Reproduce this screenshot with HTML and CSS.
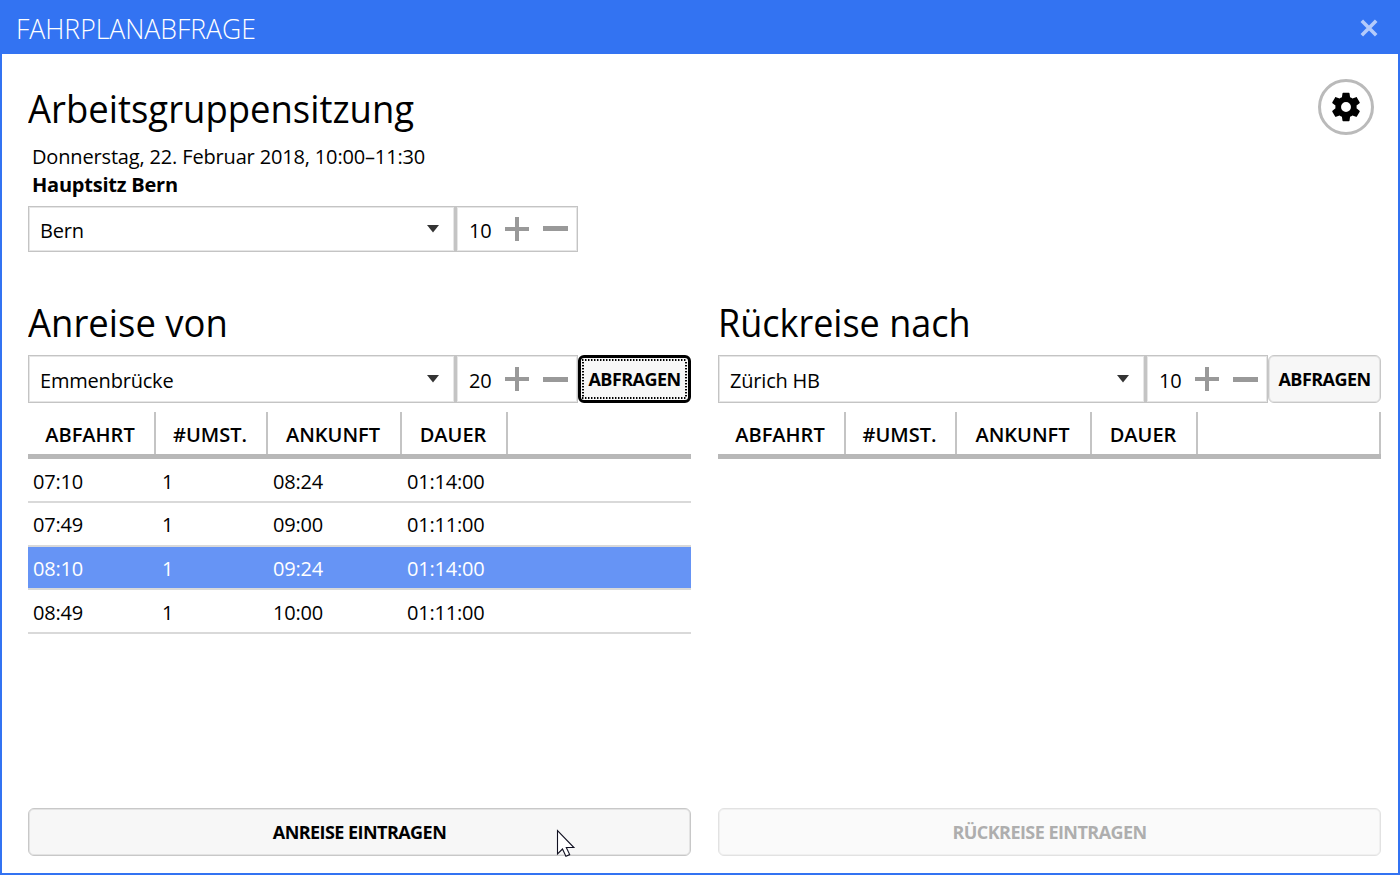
FILE: index.html
```
<!DOCTYPE html>
<html lang="de">
<head>
<meta charset="utf-8">
<title>Fahrplanabfrage</title>
<link rel="stylesheet" href="styles.css">
</head>
<body>
<div class="window">
  <header class="titlebar">
    <span class="titlebar-text">FAHRPLANABFRAGE</span>
    <svg class="close" width="18" height="18" viewBox="0 0 18 18"><path d="M1.8 1.8 16.2 16.2M16.2 1.8 1.8 16.2" stroke="#b4cbfb" stroke-width="3.6" fill="none"/></svg>
  </header>
  <main class="content">
    <section class="meeting">
      <div class="meeting-info">
        <h1 class="heading meeting-title">Arbeitsgruppensitzung</h1>
        <p class="meeting-date">Donnerstag, 22. Februar 2018, 10:00–11:30</p>
        <p class="meeting-place">Hauptsitz Bern</p>
        <div class="controls controls-top">
          <div class="combo"><span>Bern</span><svg class="caret" width="12" height="8" viewBox="0 0 12 8"><path d="M0 0h12L6 7.5z" fill="#333"/></svg></div>
          <div class="spinner"><span class="num">10</span><svg class="plus" width="24" height="24" viewBox="0 0 24 24"><path d="M0 12h24M12 0v24" stroke="#999" stroke-width="4"/></svg><svg class="minus" width="25" height="24" viewBox="0 0 25 24"><path d="M0 11.5h25" stroke="#999" stroke-width="5"/></svg></div>
        </div>
      </div>
      <div class="gear"><svg width="34" height="34" viewBox="0 0 24 24"><path d="M12,15.5A3.5,3.5 0 0,1 8.5,12A3.5,3.5 0 0,1 12,8.5A3.5,3.5 0 0,1 15.5,12A3.5,3.5 0 0,1 12,15.5M19.43,12.97C19.47,12.65 19.5,12.33 19.5,12C19.5,11.67 19.47,11.34 19.43,11L21.54,9.37C21.73,9.22 21.78,8.95 21.66,8.73L19.66,5.27C19.54,5.05 19.27,4.96 19.05,5.05L16.56,6.05C16.04,5.66 15.5,5.32 14.87,5.07L14.5,2.42C14.46,2.18 14.25,2 14,2H10C9.75,2 9.54,2.18 9.5,2.42L9.13,5.07C8.5,5.32 7.96,5.66 7.44,6.05L4.95,5.05C4.73,4.96 4.46,5.05 4.34,5.27L2.34,8.73C2.21,8.95 2.27,9.22 2.46,9.37L4.57,11C4.53,11.34 4.5,11.67 4.5,12C4.5,12.33 4.53,12.65 4.57,12.97L2.46,14.63C2.27,14.78 2.21,15.05 2.34,15.27L4.34,18.73C4.46,18.95 4.73,19.03 4.95,18.95L7.44,17.94C7.96,18.34 8.5,18.68 9.13,18.93L9.5,21.58C9.54,21.82 9.75,22 10,22H14C14.25,22 14.46,21.82 14.5,21.58L14.87,18.93C15.5,18.67 16.04,18.34 16.56,17.94L19.05,18.95C19.27,19.03 19.54,18.95 19.66,18.73L21.66,15.27C21.78,15.05 21.73,14.78 21.54,14.63L19.43,12.97Z"/></svg></div>
    </section>
    <div class="trips">
      <section class="trip outbound">
        <h2 class="heading trip-title">Anreise von</h2>
        <div class="controls">
          <div class="combo"><span>Emmenbrücke</span><svg class="caret" width="12" height="8" viewBox="0 0 12 8"><path d="M0 0h12L6 7.5z" fill="#333"/></svg></div>
          <div class="spinner"><span class="num">20</span><svg class="plus" width="24" height="24" viewBox="0 0 24 24"><path d="M0 12h24M12 0v24" stroke="#999" stroke-width="4"/></svg><svg class="minus" width="25" height="24" viewBox="0 0 25 24"><path d="M0 12.5h25" stroke="#999" stroke-width="5"/></svg></div>
          <button class="btn query focused">ABFRAGEN</button>
        </div>
        <div class="row head"><div>ABFAHRT</div><div>#UMST.</div><div>ANKUNFT</div><div>DAUER</div></div>
        <div class="row"><div>07:10</div><div>1</div><div>08:24</div><div>01:14:00</div></div>
        <div class="row"><div>07:49</div><div>1</div><div>09:00</div><div>01:11:00</div></div>
        <div class="row selected"><div>08:10</div><div>1</div><div>09:24</div><div>01:14:00</div></div>
        <div class="row last"><div>08:49</div><div>1</div><div>10:00</div><div>01:11:00</div></div>
        <button class="btn submit">ANREISE EINTRAGEN</button>
      </section>
      <section class="trip return">
        <h2 class="heading trip-title">Rückreise nach</h2>
        <div class="controls">
          <div class="combo"><span>Zürich HB</span><svg class="caret" width="12" height="8" viewBox="0 0 12 8"><path d="M0 0h12L6 7.5z" fill="#333"/></svg></div>
          <div class="spinner"><span class="num">10</span><svg class="plus" width="24" height="24" viewBox="0 0 24 24"><path d="M0 12h24M12 0v24" stroke="#999" stroke-width="4"/></svg><svg class="minus" width="25" height="24" viewBox="0 0 25 24"><path d="M0 12.5h25" stroke="#999" stroke-width="5"/></svg></div>
          <button class="btn query">ABFRAGEN</button>
        </div>
        <div class="row head"><div>ABFAHRT</div><div>#UMST.</div><div>ANKUNFT</div><div>DAUER</div><div></div></div>
        <button class="btn submit" disabled>RÜCKREISE EINTRAGEN</button>
      </section>
    </div>
  </main>
  <svg class="cursor" width="20" height="30" viewBox="0 0 20 30"><path d="M1.5 1.5v23.4l5-4.9 3.4 7.2 3.8-1.6-3.4-7.1h7.6z" fill="#fff" stroke="#112" stroke-width="1.1"/></svg>
</div>
</body>
</html>
```

FILE: styles.css
```
* { box-sizing: border-box; }
body { margin: 0; font-family: "Open Sans", "Noto Sans", sans-serif; font-size: 20px; letter-spacing: -0.2px; color: #000; }
h1, h2, p { margin: 0; font-weight: 400; }
.window { position: relative; width: 1400px; height: 875px; border: 2px solid #3373f2; background: #fff; display: flex; flex-direction: column; overflow: hidden; }
.titlebar { height: 52px; flex: none; background: #3373f2; color: #fff; display: flex; align-items: center; justify-content: space-between; padding: 0 20.5px 0 14px; }
.titlebar-text { font-size: 28px; font-weight: 300; line-height: 50px; letter-spacing: 0; transform: scaleX(0.948); transform-origin: left; }
.content { flex: 1; display: flex; flex-direction: column; padding: 26px 17px 17px 26px; }
.meeting { display: flex; justify-content: space-between; height: 214px; }
.heading { font-size: 39px; line-height: 55px; height: 54px; white-space: nowrap; letter-spacing: 0; transform: scaleX(0.935); transform-origin: left; }
.meeting-date, .meeting-place { padding-left: 4px; line-height: 28px; height: 28px; white-space: nowrap; }
.meeting-date { margin-top: 9px; letter-spacing: -0.16px; }
.meeting-place { font-weight: 700; letter-spacing: -0.23px; }
.controls { display: flex; height: 48px; line-height: 46px; }
.controls-top { height: 46px; margin-top: 7px; line-height: 44px; }
.combo, .spinner { border: 1px solid #c4c4c4; box-shadow: inset 0 0 0 1px #e6e6e6; display: flex; align-items: center; }
.combo { width: 428px; padding: 0 15px 0 11px; justify-content: space-between; border-right-width: 2px; }
.combo span, .num { padding-top: 3px; }
.spinner { width: 122px; padding-left: 12px; }
.num { width: 23px; margin-right: 13px; }
.plus { margin-right: 14px; }
.gear { width: 56px; height: 56px; margin: -1px 7px 0 0; border: 3.5px solid #bababa; border-radius: 50%; display: flex; align-items: center; justify-content: center; }
.gear svg { margin: -1px 0 0 -1px; }
.trips { flex: 1; display: grid; grid-template-columns: 663px 663px; column-gap: 27px; }
.trip { display: flex; flex-direction: column; }
.trip-title { height: 61px; line-height: 56px; }
.return .trip-title { transform: scaleX(0.923); }
.btn { position: relative; font-family: inherit; font-size: 18px; font-weight: 700; letter-spacing: -0.55px; padding: 0; border: 1px solid #c8c8c8; box-shadow: inset 0 0 0 1px #e3e3e3; border-radius: 6px; background: #f7f7f7; color: #000; white-space: nowrap; }
.query { width: 113px; }
.focused { border: 3px solid #000; box-shadow: none; }
/* dotted focus frame just inside the button border */
.focused::after {
  content: ""; position: absolute; inset: 1px;
  --h: repeating-linear-gradient(90deg, #000 0 1px, #888 1px 2px, #f7f7f7 2px 3px);
  --v: repeating-linear-gradient(#000 0 1px, #888 1px 2px, #f7f7f7 2px 3px);
  background: var(--h) top / 100% 2px no-repeat, var(--h) bottom / 100% 2px no-repeat, var(--v) left / 2px 100% no-repeat, var(--v) right / 2px 100% no-repeat;
}
.submit { height: 48px; margin-top: auto; }
.submit:disabled { border-color: #e2e2e2; box-shadow: inset 0 0 0 1px #f0f0f0; background: #fafafa; color: #aeaeae; }
.row { display: grid; grid-template-columns: 128px 112px 134px 106px 183px; height: 44px; line-height: 44px; border-bottom: 2px solid #d9d9d9; }
.return .row { grid-template-columns: 128px 111px 135px 106px 183px; }
.row > div { padding-left: 5px; }
.row > div:nth-child(2) { padding-left: 6px; }
.head { height: 47px; margin-top: 9px; line-height: 46px; border-bottom: 5px solid #b8b8b8; font-weight: 600; letter-spacing: 0; }
.head > div, .head > div:nth-child(2) { height: 42px; padding: 0 2px 0 0; border-right: 2px solid #c4c4c4; text-align: center; }
.head + .row, .last { line-height: 46px; grid-template-rows: 42px; }
.selected { height: 43px; background: #6694f5; color: #fff; }
.cursor { position: absolute; left: 554px; top: 827px; }
```
